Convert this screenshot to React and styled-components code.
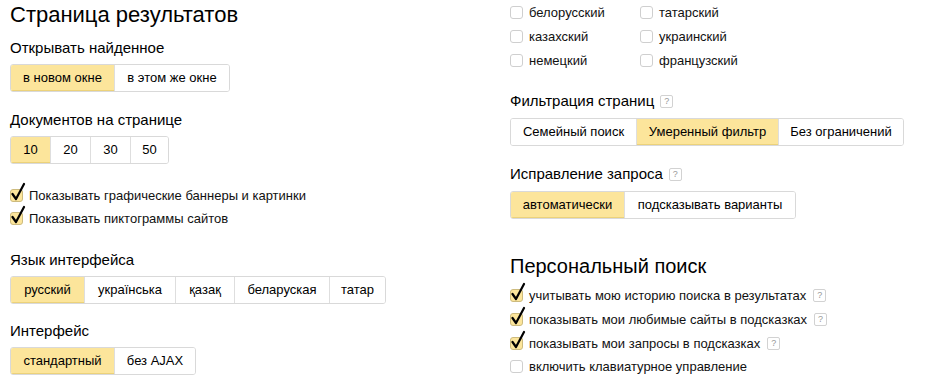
import React from 'react';
import styled, { createGlobalStyle } from 'styled-components';

const GlobalStyle = createGlobalStyle`
  body {
    margin: 0;
    background: #fff;
    font-family: "Liberation Sans", Arial, sans-serif;
    color: #000;
  }
`;

const Page = styled.div`
  display: grid;
  grid-template-columns: 500px 1fr;
  padding-left: 10px;
  width: 930px;
  height: 392px;
  box-sizing: border-box;
  overflow: hidden;
`;

const Column = styled.div`
  display: flex;
  flex-direction: column;
  align-items: flex-start;
`;

const Title = styled.h1`
  margin: ${p => p.top || 0}px 0 0;
  font-size: ${p => p.size || 22}px;
  font-weight: normal;
  line-height: 30px;
  color: #000;
`;

const Label = styled.div`
  margin-top: ${p => p.top || 0}px;
  font-size: 15px;
  line-height: 20px;
  color: #000;
  display: flex;
  align-items: center;
  gap: 6px;
`;

const Group = styled.div`
  display: flex;
  margin-top: ${p => p.top || 6}px;
  border: 1px solid #d9d9d9;
  border-radius: 3px;
  overflow: hidden;
`;

const Btn = styled.div`
  height: 26px;
  line-height: 26px;
  width: ${p => p.w}px;
  box-sizing: border-box;
  text-align: center;
  font-size: 13px;
  color: #000;
  background: ${p => (p.on ? '#fce59b' : '#fff')};
  border-left: ${p => (p.first ? 'none' : '1px solid #dedede')};
  ${p => p.on && 'box-shadow: inset 0 -1px 0 #ecd27a;'}
`;

const CheckRow = styled.div`
  display: flex;
  align-items: center;
  height: ${p => p.h || 23}px;
  margin-top: ${p => p.top || 0}px;
  font-size: 13px;
  color: #111;
`;

const Box = styled.span`
  position: relative;
  width: 13px;
  height: 13px;
  box-sizing: border-box;
  border: 1px solid ${p => (p.checked ? '#cdbb7e' : '#cfcfcf')};
  border-radius: 3px;
  background: ${p => (p.checked ? '#fce59b' : '#fff')};
  margin-right: 6px;
  flex: none;
  svg {
    position: absolute;
    left: 0;
    top: -8px;
  }
`;

const LangGrid = styled.div`
  display: grid;
  grid-template-columns: 130px 130px;
  grid-auto-rows: 24px;
`;

const Help = styled.span`
  display: inline-block;
  width: 11px;
  height: 11px;
  line-height: 11px;
  border: 1px solid #d2d2d2;
  border-radius: 2px;
  font-size: 9px;
  color: #999;
  text-align: center;
  margin-left: ${p => p.ml || 0}px;
`;

function Check({ checked, children, help, h, top }) {
  return (
    <CheckRow h={h} top={top}>
      <Box checked={checked}>
        {checked && (
          <svg width="15" height="20" viewBox="0 0 15 20">
            <path d="M1.5 12 L5 17 L13 2" fill="none" stroke="#000" strokeWidth="2.2" strokeLinecap="round" strokeLinejoin="round" />
          </svg>
        )}
      </Box>
      {children}
      {help && <Help ml={7}>?</Help>}
    </CheckRow>
  );
}

function Buttons({ items, active, top }) {
  return (
    <Group top={top}>
      {items.map(([t, w], i) => (
        <Btn key={t} w={w} first={i === 0} on={i === active}>{t}</Btn>
      ))}
    </Group>
  );
}

export default function App() {
  return (
    <>
      <GlobalStyle />
      <Page>
        <Column>
          <Title>Страница результатов</Title>
          <Label top={8}>Открывать найденное</Label>
          <Buttons active={0} items={[['в новом окне', 103], ['в этом же окне', 115]]} />
          <Label top={18}>Документов на странице</Label>
          <Buttons active={0} items={[['10', 39], ['20', 40], ['30', 40], ['50', 38]]} />
          <Check checked top={20}>Показывать графические баннеры и картинки</Check>
          <Check checked>Показывать пиктограммы сайтов</Check>
          <Label top={20}>Язык интерфейса</Label>
          <Buttons active={0} items={[['русский', 73], ['українська', 91], ['қазақ', 59], ['беларуская', 95], ['татар', 56]]} />
          <Label top={17}>Интерфейс</Label>
          <Buttons active={0} items={[['стандартный', 103], ['без AJAX', 81]]} />
        </Column>
        <Column>
          <LangGrid>
            <Check h={24}>белорусский</Check>
            <Check h={24}>татарский</Check>
            <Check h={24}>казахский</Check>
            <Check h={24}>украинский</Check>
            <Check h={24}>немецкий</Check>
            <Check h={24}>французский</Check>
          </LangGrid>
          <Label top={19}>Фильтрация страниц <Help>?</Help></Label>
          <Buttons top={7} active={1} items={[['Семейный поиск', 125], ['Умеренный фильтр', 142], ['Без ограничений', 125]]} />
          <Label top={18}>Исправление запроса <Help>?</Help></Label>
          <Buttons top={7} active={0} items={[['автоматически', 113], ['подсказывать варианты', 171]]} />
          <Title size={20} top={32}>Персональный поиск</Title>
          <Check checked help h={24} top={2}>учитывать мою историю поиска в результатах</Check>
          <Check checked help h={24}>показывать мои любимые сайты в подсказках</Check>
          <Check checked help h={24}>показывать мои запросы в подсказках</Check>
          <Check h={23}>включить клавиатурное управление</Check>
        </Column>
      </Page>
    </>
  );
}
